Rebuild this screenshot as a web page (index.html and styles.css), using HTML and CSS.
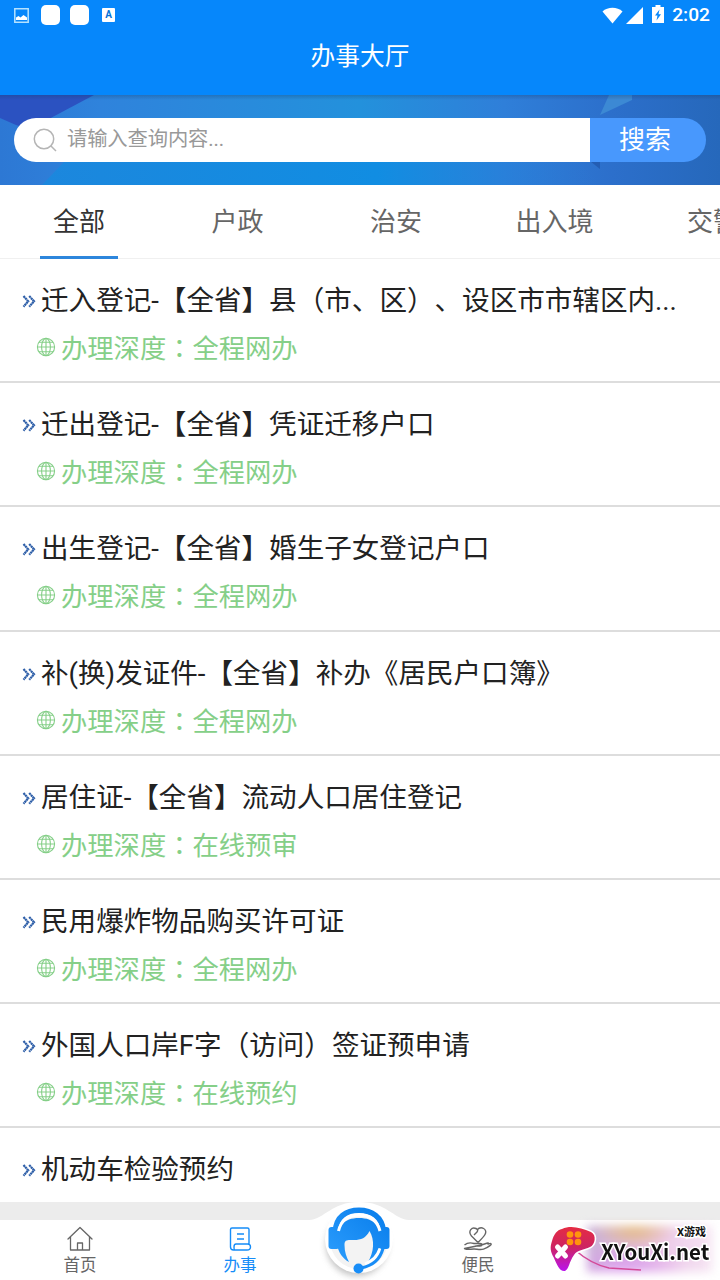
FILE: index.html
```html
<!DOCTYPE html>
<html lang="zh-CN">
<head>
    <meta charset="UTF-8">
    <meta name="viewport" content="width=device-width, initial-scale=1.0">
    <title>办事大厅</title>
    <link rel="stylesheet" href="styles.css">
</head>
<body>
    <!-- icons used by every list row -->
    <svg class="defs" width="0" height="0">
        <symbol id="arrow" viewBox="0 0 14 13">
            <path d="M1.5 1 6.2 6.3 1.5 11.700M7.200 1 12 6.3 7.200 11.700" fill="none" stroke="#2d5ea8" stroke-width="2.200" stroke-dasharray="2.200 .4"/>
        </symbol>
        <symbol id="globe" viewBox="0 0 20 20">
            <g fill="none" stroke="#85cf88" stroke-width="1.1">
                <circle cx="10" cy="10" r="8.6"/>
                <ellipse cx="10" cy="10" rx="4.4" ry="8.6"/>
                <path d="M10 1.4v17.2M1.4 10h17.2M3 5.2h14M3 14.8h14"/>
            </g>
        </symbol>
    </svg>

    <div class="page">
        <div class="status-bar">
            <div class="status-left">
                <svg width="15" height="15" viewBox="0 0 15 15"><path d="M.8.8h13.4v13.4H.8z" fill="none" stroke="#b5e2ff" stroke-width="1.5"/><path d="M2 12V9.500L4.500 8l2 1.500L9.500 7 13 9.500V12z" fill="#fff"/></svg>
                <span class="app-dot"></span>
                <span class="app-dot"></span>
                <span class="app-a">A</span>
            </div>
            <div class="status-right">
                <svg class="wifi" width="21" height="17" viewBox="0 0 22 17"><path d="M.5 4.200C6-1 16-1 21.500 4.200L11 17z" fill="#fff"/></svg>
                <svg class="signal" width="17" height="17" viewBox="0 0 17 17"><path d="M17 0v17H0z" fill="#fff"/></svg>
                <svg class="battery" width="12" height="18" viewBox="0 0 12 18"><path d="M3.500 0h5v2H12v16H0V2h3.500z" fill="#fff"/><path d="M7.500 4.500 3 10.500h2.500L4.500 15.500 9 9.300H6.500z" fill="#0687fb"/></svg>
                <span class="time">2:02</span>
            </div>
        </div>
        <div class="title-bar">办事大厅</div>

        <div class="banner">
            <svg class="banner-bg" width="720" height="90" viewBox="0 0 720 90">
                <defs>
                    <linearGradient id="bg" x1="0" y1="0" x2="1" y2="0">
                        <stop offset="0" stop-color="#2d78d4"/>
                        <stop offset=".14" stop-color="#2f83dc"/>
                        <stop offset=".5" stop-color="#2391dc"/>
                        <stop offset=".7" stop-color="#2f7fd9"/>
                        <stop offset=".85" stop-color="#2c6fcb"/>
                        <stop offset="1" stop-color="#2668bb"/>
                    </linearGradient>
                    <linearGradient id="bg2" x1="0" y1="0" x2="1" y2="0">
                        <stop offset="0" stop-color="#1c87dd"/>
                        <stop offset=".6" stop-color="#118de2"/>
                        <stop offset="1" stop-color="#2b79d6" stop-opacity="0"/>
                    </linearGradient>
                    <linearGradient id="shade" x1="0" y1="0" x2="0" y2="1">
                        <stop offset="0" stop-color="#13406f" stop-opacity=".3"/>
                        <stop offset="1" stop-color="#13406f" stop-opacity="0"/>
                    </linearGradient>
                </defs>
                <rect width="720" height="90" fill="url(#bg)"/>
                <path d="M42 90 85 45H560L600 90z" fill="url(#bg2)"/>
                <path d="M0 0H94L30 34 16 30 0 23z" fill="#2b52c1"/>
                <path d="M600 20 609 0h23v5z" fill="#3c89d4"/>
                <path d="M590 66h10v8z" fill="#235db3"/>
                <rect width="720" height="5" fill="url(#shade)"/>
            </svg>
            <div class="search">
                <div class="search-input">
                    <svg width="24" height="24" viewBox="0 0 24 24"><g fill="none" stroke="#b5b5b5" stroke-width="1.5"><circle cx="11" cy="11" r="9.700"/><path d="m18 18 5 5"/></g></svg>
                    <span>请输入查询内容...</span>
                </div>
                <div class="search-btn">搜索</div>
            </div>
        </div>

        <div class="tabs">
            <div class="tab active">全部</div>
            <div class="tab">户政</div>
            <div class="tab">治安</div>
            <div class="tab">出入境</div>
            <div class="tab">交警</div>
        </div>

        <div class="list">
            <div class="item">
                <div class="name"><svg><use href="#arrow"/></svg><span>迁入登记-【全省】县<i lang="zh-TW">（</i>市、区<i lang="zh-TW">）</i>、设区市市辖区内...</span></div>
                <div class="depth"><svg><use href="#globe"/></svg><span>办理深度<i lang="zh-TW">：</i>全程网办</span></div>
            </div>
            <div class="item">
                <div class="name"><svg><use href="#arrow"/></svg><span>迁出登记-【全省】凭证迁移户口</span></div>
                <div class="depth"><svg><use href="#globe"/></svg><span>办理深度<i lang="zh-TW">：</i>全程网办</span></div>
            </div>
            <div class="item">
                <div class="name"><svg><use href="#arrow"/></svg><span>出生登记-【全省】婚生子女登记户口</span></div>
                <div class="depth"><svg><use href="#globe"/></svg><span>办理深度<i lang="zh-TW">：</i>全程网办</span></div>
            </div>
            <div class="item">
                <div class="name"><svg><use href="#arrow"/></svg><span>补(换)发证件-【全省】补办《居民户口簿》</span></div>
                <div class="depth"><svg><use href="#globe"/></svg><span>办理深度<i lang="zh-TW">：</i>全程网办</span></div>
            </div>
            <div class="item">
                <div class="name"><svg><use href="#arrow"/></svg><span>居住证-【全省】流动人口居住登记</span></div>
                <div class="depth"><svg><use href="#globe"/></svg><span>办理深度<i lang="zh-TW">：</i>在线预审</span></div>
            </div>
            <div class="item">
                <div class="name"><svg><use href="#arrow"/></svg><span>民用爆炸物品购买许可证</span></div>
                <div class="depth"><svg><use href="#globe"/></svg><span>办理深度<i lang="zh-TW">：</i>全程网办</span></div>
            </div>
            <div class="item">
                <div class="name"><svg><use href="#arrow"/></svg><span>外国人口岸F字<i lang="zh-TW">（</i>访问<i lang="zh-TW">）</i>签证预申请</span></div>
                <div class="depth"><svg><use href="#globe"/></svg><span>办理深度<i lang="zh-TW">：</i>在线预约</span></div>
            </div>
            <div class="item">
                <div class="name"><svg><use href="#arrow"/></svg><span>机动车检验预约</span></div>
            </div>
        </div>

        <div class="footer">
            <div class="nav">
                <div class="nav-item">
                    <svg width="26" height="26" viewBox="0 0 26 26"><path d="M1 13 13 1.500 25 13M3.500 11v13h19V11M10.500 24v-7h5v7" fill="none" stroke="#666" stroke-width="1.300" stroke-linejoin="round" stroke-linecap="round"/></svg>
                    <span>首页</span>
                </div>
                <div class="nav-item on">
                    <svg width="26" height="26" viewBox="0 0 26 26"><path d="M22 18V3.500Q22 2 20.500 2H5Q3.500 2 3.500 3.500V21Q3.500 24 6.500 24H20Q23.500 24 23.500 21T20.500 18H9Q7 18 7 21T8 24M10 8h7M10 13h7" fill="none" stroke="#158cf8" stroke-width="1.400"/></svg>
                    <span>办事</span>
                </div>
                <div class="nav-item mid"></div>
                <div class="nav-item">
                    <svg width="30" height="26" viewBox="0 0 30 26"><g fill="none" stroke="#666" stroke-width="1.400" stroke-linejoin="round"><path d="M15 16.500 8.500 10C4.500 5 9 .5 13 2.500c2 1 2 2 1 3.500l-3 3M14 4c4-4.500 11-1 8 4.500-1 2-4 5-7 8"/><path d="M1.500 19C5 16 8 16.500 11 17.500h6c3 0 2.500 2.500 0 2.500h-4.500M18.500 19l6-2c1-.4 1.300.4.500 1l1.700-.4c2-.4 1.800 1 .6 1.800C22 23.500 19 24 14 23.200 8 22.300 5.500 24.500 1.500 22.500z"/></g></svg>
                    <span>便民</span>
                </div>
                <div class="nav-item"></div>
            </div>

            <svg class="service" width="100" height="78" viewBox="0 0 100 78">
                <defs>
                    <linearGradient id="blue" gradientUnits="userSpaceOnUse" x1="25" y1="60" x2="70" y2="10">
                        <stop offset="0" stop-color="#2b9cfc"/>
                        <stop offset="1" stop-color="#0b80ed"/>
                    </linearGradient>
                    <filter id="soft" x="-20%" y="-20%" width="140%" height="140%"><feGaussianBlur stdDeviation="3"/></filter>
                </defs>
                <path d="M0 18C16 17 22 0 50 0s34 17 50 18v60H0z" fill="#fff"/>
                <circle cx="48" cy="43" r="31" fill="#aaa" opacity=".7" filter="url(#soft)"/>
                <circle cx="50" cy="37" r="34" fill="#fff"/>
                <circle cx="50" cy="38" r="29" fill="#f3f3f3"/>
                <!-- headband and ear cups -->
                <path d="M26.500 29C27 15 37 8.300 50 8.300S73 15 74.500 29" fill="none" stroke="#fff" stroke-width="12"/>
                <path d="M26.500 29C27 15 37 8.300 50 8.300S73 15 74.500 29" fill="none" stroke="url(#blue)" stroke-width="5.500"/>
                <rect x="19.500" y="25" width="11" height="22" rx="3" fill="url(#blue)"/>
                <rect x="69.500" y="25" width="11" height="22" rx="3" fill="url(#blue)"/>
                <!-- hair -->
                <path d="M28 42C27 24 35 16 50 16S73 24 71.500 42C70 50 66 57 59 60 65 50 66 38 60.500 29 57 36 52 38 45 38c-6 0-9.500-1-9.500 5 0 7 2 12 4.500 17C34 57 29 50 28 42z" fill="url(#blue)"/>
                <path d="M29.500 29C32 18 40 13 50 13S68 18 71 29" fill="none" stroke="#fff" stroke-width="3"/>
                <!-- microphone -->
                <path d="M71 46.500C68 55 64 58.500 56 62" fill="none" stroke="#fff" stroke-width="3"/>
                <path d="M74 46.500C71 57 65 63 52 66" fill="none" stroke="#188df7" stroke-width="3"/>
                <circle cx="49.500" cy="66.500" r="5" fill="#188df7"/>
            </svg>

            <div class="watermark">
                <div class="glow"></div>
                <svg width="170" height="60" viewBox="0 0 170 60">
                    <defs>
                        <linearGradient id="pad" x1="0" y1="0" x2="0" y2="1">
                            <stop offset="0" stop-color="#e52c43"/>
                            <stop offset=".45" stop-color="#cd2461"/>
                            <stop offset="1" stop-color="#b914ed"/>
                        </linearGradient>
                    </defs>
                    <path d="M26 30q16 14 34 18l32 2" fill="none" stroke="#d44a99" stroke-width="1.500"/>
                    <path d="M13 9C22 5 32 8 42 12c6 3 4 13-1 15-6 3-13 3-16 8-5 7-5 14-9 16-5 1-8-6-11-13C1 31 1 27 3 21 5 14 8 10 13 9z" fill="url(#pad)" stroke="#fff" stroke-width="3" paint-order="stroke"/>
                    <g fill="#ff950d"><circle cx="21" cy="14.500" r="3.300"/><circle cx="29" cy="14.500" r="3.300"/><circle cx="21" cy="22" r="3.300"/><circle cx="29" cy="22" r="3.300"/></g>
                    <path d="m8.500 27 8 9m0-9-8 9" stroke="#fff" stroke-width="5" stroke-linecap="round"/>
                </svg>
                <span class="wm-small">X游戏</span>
                <span class="wm-big">XYouXi.net</span>
            </div>
        </div>
    </div>
</body>
</html>
```
FILE: styles.css
```css
* {
    box-sizing: border-box;
}

body {
    margin: 0;
    background-color: #fff;
    color: #222;
    font-family: Roboto, "Noto Sans CJK SC", sans-serif;
    text-spacing-trim: space-all;
}

.defs {
    position: absolute;
}

.page {
    width: 720px;
    height: 1280px;
    overflow: hidden;
    display: flex;
    flex-direction: column;
}

/* header */
.status-bar {
    height: 32px;
    flex: none;
    padding: 0 10px 2px 14px;
    background-color: #0687fb;
    display: flex;
    justify-content: space-between;
    align-items: center;
}

.status-left,
.status-right {
    display: flex;
    align-items: center;
}

.app-dot {
    width: 19px;
    height: 20px;
    margin-left: 12px;
    border-radius: 5px;
    background-color: #fff;
}

.app-dot + .app-dot {
    margin-left: 10px;
}

.app-a {
    width: 13px;
    height: 14px;
    margin-left: 13px;
    border-radius: 1px;
    background-color: #fff;
    color: #0673d8;
    font-size: 10px;
    font-weight: bold;
    line-height: 14px;
    text-align: center;
}

.signal {
    margin-left: 3px;
}

.battery {
    margin-left: 9px;
    margin-top: -3px;
}

.time {
    margin-left: 8px;
    color: #fff;
    font-size: 19.2px;
    font-weight: 500;
    line-height: 30px;
}

.title-bar {
    height: 63px;
    flex: none;
    background-color: #0687fb;
    color: #fff;
    font-size: 24.7px;
    line-height: 50px;
    text-align: center;
}

.banner {
    position: relative;
    height: 90px;
    flex: none;
    padding: 23px 14px;
}

.banner-bg {
    position: absolute;
    top: 0;
    left: 0;
}

.search {
    position: relative;
    display: flex;
    height: 44px;
    border-radius: 22px;
    overflow: hidden;
}

.search-input {
    width: 576px;
    padding-left: 19px;
    background-color: #fff;
    color: #999;
    font-size: 20.3px;
    line-height: 42px;
    letter-spacing: -0.1px;
    display: flex;
}

.search-input svg {
    margin: 10px 10px 0 0;
}

.search-btn {
    width: 116px;
    padding-right: 6px;
    background-color: #4898fd;
    color: #fff;
    font-size: 26px;
    line-height: 44px;
    text-align: center;
}

/* tabs */
.tabs {
    height: 74px;
    flex: none;
    padding-left: 40px;
    border-bottom: 1px solid #f0f0f0;
    display: flex;
    gap: 80.5px;
}

.tab {
    width: 78px;
    height: 74px;
    flex: none;
    color: #666;
    font-size: 26px;
    line-height: 74px;
    text-align: center;
}

.tab.active {
    color: #333;
    border-bottom: 3px solid #2d86dc;
}

/* list */
.list {
    height: 943px;
    flex: none;
    overflow: hidden;
}

.item {
    height: 124.2px;
    border-bottom: 2px solid #ddd;
}

.item i {
    font-family: "Noto Sans CJK TC", sans-serif;
    font-style: normal;
    line-height: 1;
}

.name {
    height: 66px;
    padding-left: 22px;
    font-size: 27.57px;
    line-height: 84px;
    white-space: nowrap;
    display: flex;
}

.name svg {
    width: 14px;
    height: 13px;
    flex: none;
    margin: 36px 5px 0 0;
}

.depth {
    height: 48px;
    padding-left: 36px;
    color: #85cf88;
    font-size: 26.3px;
    line-height: 48px;
    display: flex;
}

.depth svg {
    width: 20px;
    height: 20px;
    margin: 12px 5px 0 0;
}

/* bottom bar */
.footer {
    position: relative;
    height: 78px;
    flex: none;
    padding-top: 18px;
    background-color: #ececec;
}

.nav {
    height: 60px;
    background-color: #fff;
    display: flex;
}

.nav-item {
    width: 160px;
    flex: none;
    padding-top: 6px;
    color: #666;
    font-size: 16.5px;
    line-height: 27px;
    display: flex;
    flex-direction: column;
    align-items: center;
}

.nav-item.mid {
    width: 78px;
}

.nav-item.on {
    color: #158cf8;
}

.service {
    position: absolute;
    top: 0;
    left: 309px;
}

.watermark {
    position: absolute;
    top: 18px;
    left: 549px;
    width: 171px;
    height: 60px;
}

.watermark svg {
    position: absolute;
    top: 0;
    left: 0;
}

.glow {
    position: absolute;
    top: 6px;
    left: 38px;
    width: 125px;
    height: 46px;
    background: radial-gradient(ellipse at 38% 0, #e5b979, transparent 38%), radial-gradient(ellipse at 30% 100%, #dc9bee, transparent 50%), linear-gradient(90deg, #c9b0d6, #ecc9e9 60%, #f6e5f3);
    filter: blur(5px);
}

.wm-small,
.wm-big {
    position: absolute;
    color: #111;
    font-weight: bold;
    white-space: nowrap;
    -webkit-text-stroke: 3px #fff;
    paint-order: stroke fill;
}

.wm-small {
    top: 6px;
    right: 14px;
    font-size: 11px;
    line-height: 14px;
}

.wm-big {
    top: 16px;
    left: 52px;
    font-family: "Noto Sans CJK SC", sans-serif;
    font-size: 21.5px;
    line-height: 30px;
    transform: scaleX(0.95);
    transform-origin: left;
}
```
